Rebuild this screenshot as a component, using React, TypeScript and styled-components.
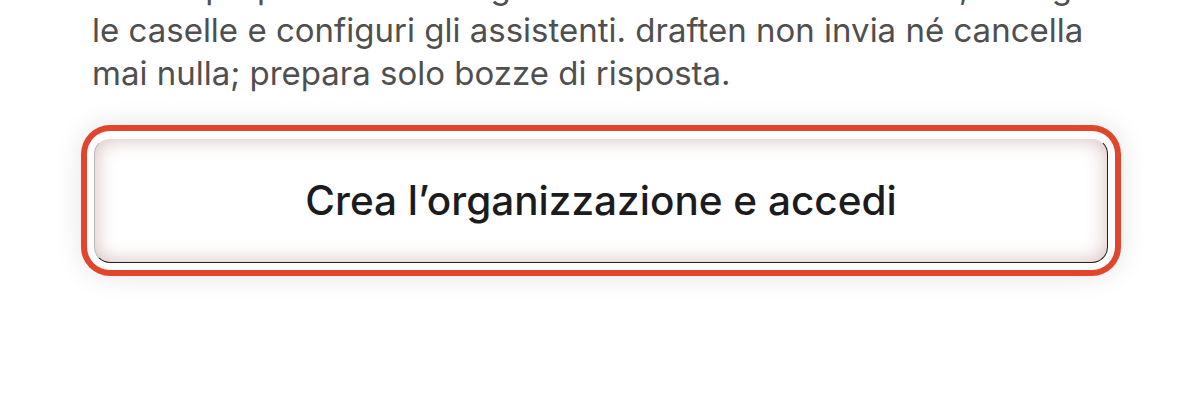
import styled, { createGlobalStyle } from "styled-components";

const GlobalStyle = createGlobalStyle`
  html, body {
    margin: 0;
    padding: 0;
    background: #ffffff;
    overflow: hidden;
  }
  body {
    font-family: "Inter", "Noto Sans", sans-serif;
  }
`;

const Page = styled.main`
  width: 1200px;
  height: 400px;
  box-sizing: border-box;
  padding: 0 92px 0 94px;
  overflow: hidden;
`;

const Intro = styled.p`
  margin: -34px 0 0 -2px;
  font-size: 33px;
  line-height: 43px;
  font-weight: 400;
  color: #4f4f4f;
`;

const SubmitButton = styled.button`
  display: flex;
  align-items: center;
  justify-content: center;
  width: 100%;
  height: 125px;
  margin-top: 43px;
  box-sizing: border-box;
  background: #ffffff;
  border: 1.5px solid;
  border-color: transparent #2a1c1c #2a1c1c rgba(70, 45, 45, 0.35);
  border-radius: 16px;
  font-family: "Inter", "Noto Sans", sans-serif;
  font-size: 40.5px;
  font-weight: 500;
  color: #1c1c1e;
  cursor: pointer;
  box-shadow:
    inset 0 0 20px rgba(150, 95, 85, 0.42),
    0 0 0 7px #ffffff,
    0 0 0 13px #e1462c,
    0 0 28px 13px rgba(0, 0, 0, 0.11);
`;

export default function App() {
  return (
    <>
      <GlobalStyle />
      <Page>
        <Intro>
          Sarai il proprietario dell’organizzazione: inviti il tuo team, colleghi
          le caselle e configuri gli assistenti. draften non invia né cancella
          mai nulla; prepara solo bozze di risposta.
        </Intro>
        <SubmitButton type="button">Crea l’organizzazione e accedi</SubmitButton>
      </Page>
    </>
  );
}
